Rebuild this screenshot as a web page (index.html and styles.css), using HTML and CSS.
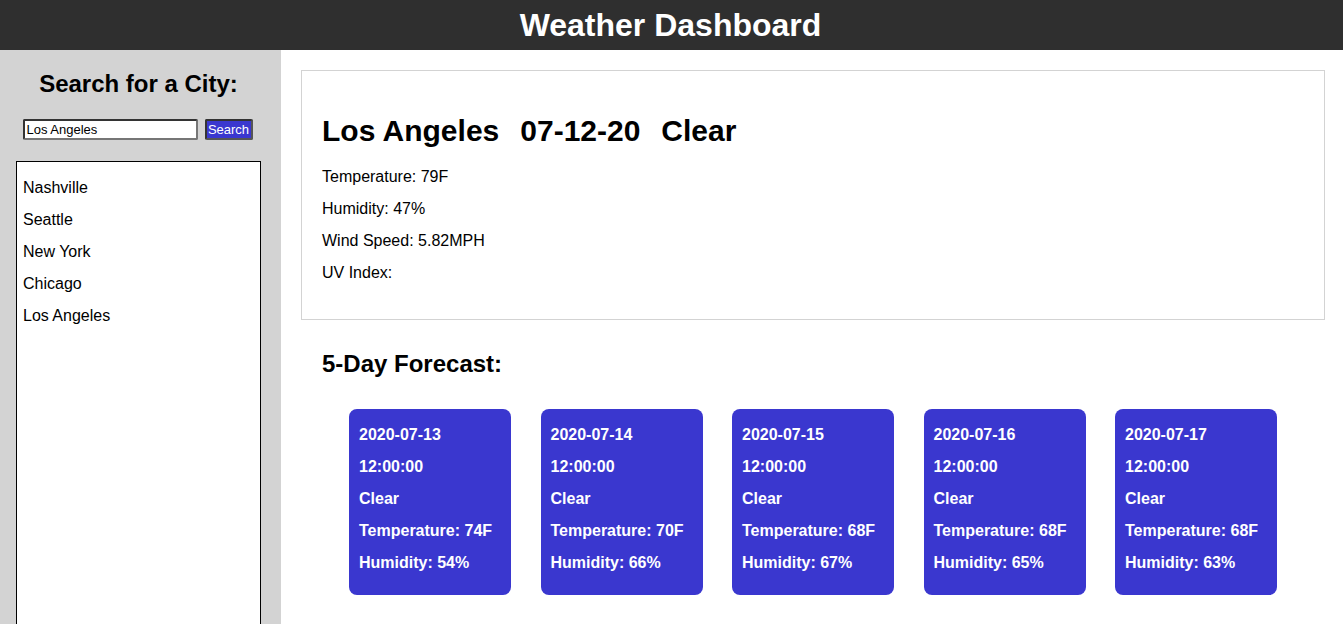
FILE: index.html
```html
<!DOCTYPE html>
<html lang="en">
<head>
<meta charset="utf-8">
<title>Weather Dashboard</title>
<link rel="stylesheet" href="styles.css">
</head>
<body>
<header class="topbar">
  <h1 class="topbar-title">Weather Dashboard</h1>
</header>
<div class="layout">
  <aside class="sidebar">
    <h2 class="sidebar-title">Search for a City:</h2>
    <form class="search">
      <input class="search-input" type="text" value="Los Angeles">
      <button class="search-btn" type="button">Search</button>
    </form>
    <div class="history">
      <p class="history-item">Nashville</p>
      <p class="history-item">Seattle</p>
      <p class="history-item">New York</p>
      <p class="history-item">Chicago</p>
      <p class="history-item">Los Angeles</p>
    </div>
  </aside>
  <main class="main">
    <section class="current">
      <h2 class="current-title"><span>Los Angeles</span><span>07-12-20</span><span>Clear</span></h2>
      <p class="current-line">Temperature: 79F</p>
      <p class="current-line">Humidity: 47%</p>
      <p class="current-line">Wind Speed: 5.82MPH</p>
      <p class="current-line">UV Index:</p>
    </section>
    <h2 class="forecast-title">5-Day Forecast:</h2>
    <div class="forecast">
      <div class="card">
        <p>2020-07-13</p><p>12:00:00</p><p>Clear</p><p>Temperature: 74F</p><p>Humidity: 54%</p>
      </div>
      <div class="card">
        <p>2020-07-14</p><p>12:00:00</p><p>Clear</p><p>Temperature: 70F</p><p>Humidity: 66%</p>
      </div>
      <div class="card">
        <p>2020-07-15</p><p>12:00:00</p><p>Clear</p><p>Temperature: 68F</p><p>Humidity: 67%</p>
      </div>
      <div class="card">
        <p>2020-07-16</p><p>12:00:00</p><p>Clear</p><p>Temperature: 68F</p><p>Humidity: 65%</p>
      </div>
      <div class="card">
        <p>2020-07-17</p><p>12:00:00</p><p>Clear</p><p>Temperature: 68F</p><p>Humidity: 63%</p>
      </div>
    </div>
  </main>
</div>
</body>
</html>
```
FILE: styles.css
```css
html, body {
  margin: 0;
  padding: 0;
  height: 100%;
  overflow: hidden;
}
body {
  font-family: "Liberation Sans", Arial, sans-serif;
  color: #000;
  background: #fff;
  display: flex;
  flex-direction: column;
}
.topbar {
  background: #2f2f2f;
  height: 50px;
  display: flex;
  align-items: center;
  justify-content: center;
  flex-shrink: 0;
}
.topbar-title {
  margin: 0;
  color: #fff;
  font-size: 32px;
  font-weight: bold;
  line-height: 36px;
  padding-right: 2px;
}
.layout {
  flex: 1;
  display: flex;
  min-height: 0;
}
.sidebar {
  width: 281px;
  flex-shrink: 0;
  background: #d3d3d3;
  padding: 20px 0 0 0;
  box-sizing: border-box;
  display: flex;
  flex-direction: column;
  align-items: center;
}
.sidebar-title {
  margin: 0;
  font-size: 24px;
  line-height: 28px;
  font-weight: bold;
  padding-right: 4px;
}
.search {
  margin: 21px 0 0 0;
  display: flex;
  gap: 7px;
  padding-right: 6px;
}
.search-input {
  width: 175px;
  height: 21px;
  box-sizing: border-box;
  font-family: "Liberation Sans", Arial, sans-serif;
  font-size: 13px;
  padding: 1px 2px;
  border: 2px solid #767676;
  border-top-color: #333;
  border-left-color: #333;
  border-radius: 2px;
  background: #fff;
}
.search-btn {
  width: 48px;
  height: 21px;
  box-sizing: border-box;
  padding: 0;
  font-family: "Liberation Sans", Arial, sans-serif;
  font-size: 13px;
  color: #fff;
  background: #3a37cf;
  border: 2px solid #555;
  border-top-color: #333;
  border-left-color: #333;
  border-radius: 2px;
}
.history {
  margin-top: 21px;
  width: 245px;
  flex: 1;
  min-height: 0;
  box-sizing: border-box;
  background: #fff;
  border: 1px solid #000;
  border-bottom: 0;
  padding: 3px 6px;
  align-self: flex-start;
  margin-left: 16px;
  overflow: hidden;
}
.history-item {
  margin: 14px 0;
  font-size: 16px;
  line-height: 18px;
}
.main {
  flex: 1;
  min-width: 0;
}
.current {
  margin: 20px 18px 0 20px;
  border: 1px solid #d3d3d3;
  padding: 21px 20px 23px 20px;
}
.current-title {
  margin: 22px 0 20px 0;
  font-size: 30px;
  line-height: 34px;
  font-weight: bold;
  display: flex;
  gap: 21px;
}
.current-line {
  margin: 14px 0;
  font-size: 16px;
  line-height: 18px;
}
.forecast-title {
  margin: 30px 0 0 41px;
  font-size: 24px;
  line-height: 28px;
  font-weight: bold;
}
.forecast {
  margin: 31px 18px 0 20px;
  display: flex;
  justify-content: center;
  gap: 29.5px;
}
.card {
  width: 162px;
  height: 186px;
  box-sizing: border-box;
  background: #3a37cf;
  color: #fff;
  border-radius: 8px;
  padding: 3px 10px 9px 10px;
  font-weight: bold;
  font-size: 16px;
}
.card p {
  margin: 14px 0;
  line-height: 18px;
}
```
